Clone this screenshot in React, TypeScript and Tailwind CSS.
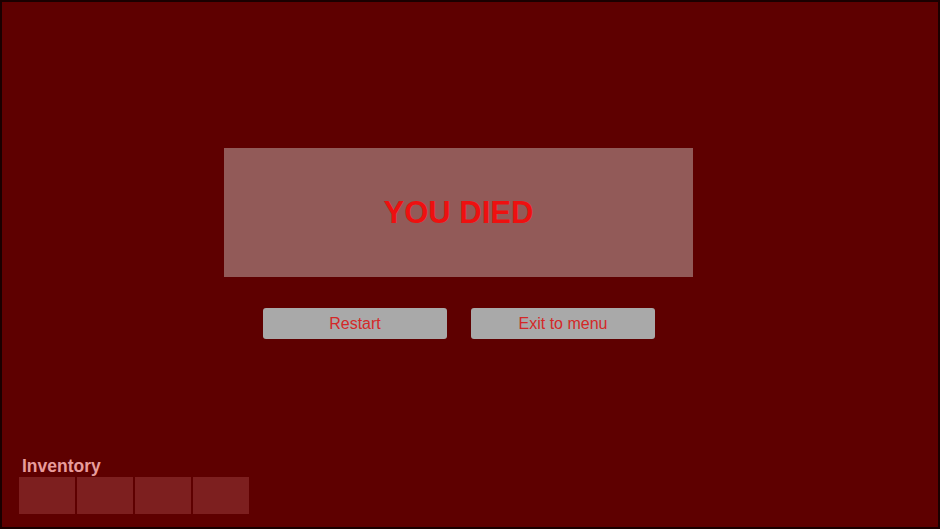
export default function App() {
  const slots = [0, 1, 2, 3];
  return (
    <div
      className="box-border flex h-[529px] w-[940px] flex-col border-2 border-[#1a0000] bg-[#5e0000]"
      style={{ fontFamily: '"Liberation Sans", Arial, sans-serif' }}
    >
      {/* Death panel */}
      <div className="ml-[222px] mt-[146px] flex h-[129px] w-[469px] items-center justify-center bg-[#925a58]">
        <h1 className="m-0 text-[31px] font-bold leading-none text-[#ee1010]">YOU DIED</h1>
      </div>

      <div className="ml-[261px] mt-[31px] flex gap-[24px]">
        <button className="h-[31px] w-[184px] rounded-[3px] bg-[#a9a9a9] pt-[1px] text-[16px] text-[#d42828]">
          Restart
        </button>
        <button className="h-[31px] w-[184px] rounded-[3px] bg-[#a9a9a9] pt-[1px] text-[16px] text-[#d42828]">
          Exit to menu
        </button>
      </div>

      {/* Inventory */}
      <div className="mb-[13px] ml-[17px] mt-auto">
        <p className="m-0 ml-[3px] text-[17.5px] font-bold leading-[20px] text-[#e89c9c]">Inventory</p>
        <div className="mt-[1px] flex gap-[2px]">
          {slots.map((s) => (
            <div key={s} className="h-[37px] w-[56px] bg-[#7d1f1f]" />
          ))}
        </div>
      </div>
    </div>
  );
}
